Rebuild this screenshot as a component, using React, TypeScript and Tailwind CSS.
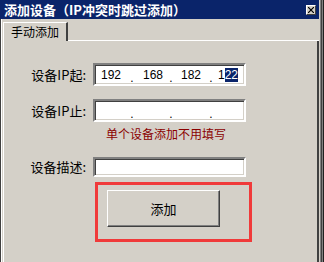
import React from 'react';

const cjk = { fontFamily: '"Noto Sans CJK SC", "Liberation Sans", sans-serif' };

const sunken =
  'border-2 border-t-[#808080] border-l-[#808080] border-b-white border-r-white shadow-[inset_1px_1px_0_#404040,inset_-1px_-1px_0_#d4d0c8] bg-white';

const IpField = ({ parts }: { parts: string[] }) => {
  const widths = ['w-[32px]', 'w-[32px]', 'w-[36px]', 'w-[30px]'];
  const dots = ['w-[10px]', 'w-[4px]', 'w-[4px]'];
  return (
    <div className={`${sunken} flex h-[23px] w-[153px] items-center text-[12px] text-black`} style={{ fontFamily: '"Liberation Sans", sans-serif' }}>
      {parts.map((p, i) => (
        <React.Fragment key={i}>
          <div className={`${widths[i]} text-center leading-none`}>
            {i === 3 && p ? (
              <span>
                1<span className="bg-[#0a246a] text-white">22</span>
              </span>
            ) : (
              p
            )}
          </div>
          {i < 3 && <div className={`${dots[i]} pt-[7px] text-center leading-none`}>.</div>}
        </React.Fragment>
      ))}
    </div>
  );
};

const Row = ({ label, children }: { label: string; children: React.ReactNode }) => (
  <div className="flex items-center">
    <div className="w-[84px] pr-[2px] text-right text-[13px] text-black" style={cjk}>
      {label}
    </div>
    <div className="ml-[5px]">{children}</div>
  </div>
);

export default function App() {
  return (
    <div className="flex h-[262px] w-[324px] overflow-hidden bg-[#d4d0c8]">
      <div className="flex w-[319px] flex-col">
        {/* title bar */}
        <div className="flex h-[19px] items-center justify-between bg-[#0a246a] pl-[4px] pr-[3px]">
          <span className="text-[13px] font-bold leading-none text-white" style={cjk}>
            添加设备（IP冲突时跳过添加）
          </span>
          <div className="flex h-[10px] w-[10px] items-center justify-center border border-t-white border-l-white border-b-[#404040] border-r-[#404040] bg-[#d4d0c8]">
            <svg width="6" height="6" viewBox="0 0 6 6">
              <path d="M0 0L6 6M6 0L0 6" stroke="black" strokeWidth="1.2" />
            </svg>
          </div>
        </div>

        <div className="flex flex-1 border-l border-l-[#404040]">
          <div className="flex flex-1 flex-col border-l border-l-white pl-[1px] pt-[2px]">
            {/* tab strip */}
            <div className="flex h-[20px] items-end">
              <div
                className="flex h-[19px] w-[65px] items-center justify-center border-l border-t border-r-2 border-l-white border-t-white border-r-[#404040] text-[12px] text-black"
                style={cjk}
              >
                手动添加
              </div>
              <div className="h-[1px] flex-1 bg-white" />
            </div>

            {/* panel */}
            <div className="flex flex-1 flex-col border-l border-r-2 border-l-white border-r-[#404040] pt-[22px]">
              <Row label="设备IP起:">
                <IpField parts={['192', '168', '182', '122']} />
              </Row>
              <div className="mt-[13px]">
                <Row label="设备IP止:">
                  <IpField parts={['', '', '', '']} />
                </Row>
              </div>
              <div className="mt-[4px] pl-[102px] text-[12px] leading-[16px] text-[#8b0000]" style={cjk}>
                单个设备添加不用填写
              </div>
              <div className="mt-[15px]">
                <Row label="设备描述:">
                  <div className={`${sunken} h-[20px] w-[153px]`} />
                </Row>
              </div>
              <div className="ml-[91px] mt-[5px] flex h-[60px] w-[157px] items-start border-[3px] border-[#f03a3a] pl-[9px] pt-[5px]">
                <button
                  className="flex h-[37px] w-[113px] items-center justify-center border border-t-white border-l-white border-b-[#404040] border-r-[#404040] bg-[#d4d0c8] text-[13px] text-black shadow-[inset_-1px_-1px_0_#808080]"
                  style={cjk}
                >
                  添加
                </button>
              </div>
            </div>
          </div>
        </div>
      </div>
      <div className="flex w-[5px]">
        <div className="w-[1px] bg-[#d4d0c8]" />
        <div className="w-[1px] bg-[#808080]" />
        <div className="w-[1px] bg-[#404040]" />
        <div className="w-[1px] bg-[#808080]" />
        <div className="w-[1px] bg-[#202020]" />
      </div>
    </div>
  );
}
